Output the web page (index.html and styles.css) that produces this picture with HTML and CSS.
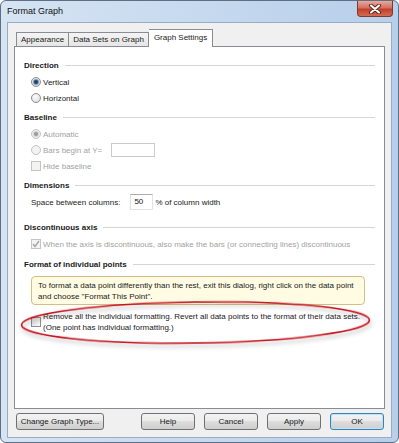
FILE: index.html
```html
<!DOCTYPE html>
<html lang="en">
<head>
  <meta charset="UTF-8" />
  <title>Format Graph</title>
  <link rel="stylesheet" href="styles.css">
</head>
<body>
  <div class="window">
    <div class="titlebar">
      <span class="title">Format Graph</span>
      <div class="close">
        <svg width="14" height="10" viewBox="0 0 14 10">
          <path d="M3 1.5 L11 8.5 M11 1.5 L3 8.5" stroke="#5a2a25" stroke-width="4" stroke-linecap="round"/>
          <path d="M3 1.5 L11 8.5 M11 1.5 L3 8.5" stroke="#fff" stroke-width="2" stroke-linecap="round"/>
        </svg>
      </div>
    </div>

    <div class="client">
      <div class="tabs">
        <div class="tab">Appearance</div>
        <div class="tab">Data Sets on Graph</div>
        <div class="tab active">Graph Settings</div>
      </div>

      <div class="panel">
        <div class="section first">
          <div class="heading">Direction</div>
          <div class="options">
            <div class="option"><span class="radio on"></span>Vertical</div>
            <div class="option"><span class="radio"></span>Horizontal</div>
          </div>
        </div>

        <div class="section">
          <div class="heading">Baseline</div>
          <div class="options disabled">
            <div class="option"><span class="radio on"></span>Automatic</div>
            <div class="option"><span class="radio"></span>Bars begin at Y=<span class="field wide"></span></div>
            <div class="option"><span class="check"></span>Hide baseline</div>
          </div>
        </div>

        <div class="section">
          <div class="heading">Dimensions</div>
          <div class="options">
            <div class="option plain">Space between columns:<span class="field short">50</span>% of column width</div>
          </div>
        </div>

        <div class="section axis">
          <div class="heading">Discontinuous axis</div>
          <div class="options disabled">
            <div class="option">
              <span class="check">
                <svg width="8" height="8" viewBox="0 0 8 8"><path d="M1 4 L3 6.5 L7 1" fill="none" stroke="#a6a6a6" stroke-width="1.4"/></svg>
              </span>When the axis is discontinuous, also make the bars (or connecting lines) discontinuous
            </div>
          </div>
        </div>

        <div class="section points">
          <div class="heading">Format of individual points</div>
          <div class="note">
            To format a data point differently than the rest, exit this dialog, right click on the data point<br>
            and choose "Format This Point".
          </div>
          <div class="option multi">
            <span class="check"></span>
            <span>Remove all the individual formatting. Revert all data points to the format of their data sets.<br>(One point has individual formatting.)</span>
          </div>
        </div>

        <svg class="highlight" viewBox="0 0 369 361">
          <defs>
            <filter id="shade" x="-10%" y="-50%" width="120%" height="200%">
              <feDropShadow dx="1" dy="3" stdDeviation="2" flood-color="#000" flood-opacity="0.3"/>
            </filter>
          </defs>
          <ellipse cx="180.5" cy="275.5" rx="174" ry="20.5" transform="rotate(-0.8 180.5 275.5)"
                   fill="none" stroke="#c3121c" stroke-width="1.6" filter="url(#shade)"/>
        </svg>
      </div>

      <div class="buttons">
        <div class="button change">Change Graph Type...</div>
        <div class="button">Help</div>
        <div class="button">Cancel</div>
        <div class="button">Apply</div>
        <div class="button default">OK</div>
      </div>
    </div>
  </div>
</body>
</html>
```

FILE: styles.css
```css
body { margin: 0; background: #fff; font-family: "Liberation Sans", Arial, sans-serif; font-size: 8px; color: #1a1a1a; }

.window { width: 399px; height: 443px; box-sizing: border-box; border: 1px solid #5e6f84; border-radius: 6px;
  background: linear-gradient(to right, #d6e4f3, #c3d7ee 60%, #b7cfea); padding-bottom: 4px; overflow: hidden; }

.titlebar { height: 21px; display: flex; align-items: flex-start; padding: 0 5px 0 6px; }
.title { font-size: 9px; line-height: 20px; color: #111; flex: 1; }
.close { width: 36px; height: 16px; box-sizing: border-box; border: 1px solid #7b3a33; border-top: none;
  border-radius: 0 0 4px 4px; background: linear-gradient(#e9a99c, #d4705f 45%, #c2402b 55%, #d56a4f);
  display: flex; align-items: center; justify-content: center; }

.client { margin: 0 6px; border: 1px solid #9aacc2; background: #f0f0f0; padding: 6px 6px 7px 6px; }

.tabs { height: 18px; margin-bottom: -1px; padding-left: 2px; display: flex; align-items: flex-end; }
.tab { height: 15px; box-sizing: border-box; border: 1px solid #898c95; border-left: none; padding: 0 4px;
  background: linear-gradient(#f4f4f4, #e6e6e6); line-height: 14px; white-space: nowrap; }
.tab:first-child { border-left: 1px solid #898c95; }
.tab.active { height: 18px; background: #fff; border-left: none; border-bottom: none; padding: 0 5px;
  line-height: 16px; position: relative; z-index: 1; }

.panel { height: 363px; box-sizing: border-box; border: 1px solid #898c95; background: #fff; padding: 11px 9px 0;
  position: relative; }

.section { margin-top: 4px; }
.section.first { margin-top: 0; }
.section.axis { margin-top: 10px; }
.section.points { margin-top: 5px; }

.heading { height: 14px; display: flex; align-items: center; gap: 6px; font-weight: bold; white-space: nowrap; }
.heading::after { content: ""; flex: 1; height: 1px; background: #d5d5d5; }

.options { margin-top: 2px; padding-left: 7px; }
.options.disabled { color: #a2a2a2; }
.option { height: 16px; display: flex; align-items: center; white-space: nowrap; }
.option.plain { padding-left: 0; }

.radio { width: 10px; height: 10px; box-sizing: border-box; border-radius: 50%; border: 1px solid #8d8f91;
  background: radial-gradient(circle at 40% 35%, #fdfdfd, #d6d7d9); margin-right: 2px; display: flex;
  align-items: center; justify-content: center; }
.radio.on::after { content: ""; width: 4px; height: 4px; border-radius: 50%; background: #24456e; box-shadow: 0 0 1px 1px #6f90bb; }
.disabled .radio { border-color: #c4c4c4; background: #f3f3f3; }
.disabled .radio.on::after { background: #9c9c9c; box-shadow: 0 0 1px 1px #d0d0d0; }

.check { width: 10px; height: 10px; box-sizing: border-box; border: 1px solid #8f8f8f;
  background: linear-gradient(135deg, #dcdcdc, #fafafa); margin-right: 2px; display: flex;
  align-items: center; justify-content: center; flex: none; }
.disabled .check { border-color: #c4c4c4; background: #f4f4f4; }

.field { display: inline-block; height: 14px; box-sizing: border-box; border: 1px solid #c8cbd0; background: #fff;
  margin-left: 9px; }
.field.wide { width: 44px; }
.field.short { width: 23px; height: 16px; border-color: #abadb3 #e2e3ea #e2e3ea #dbdfe6; margin: 0 2px 0 10px;
  padding-left: 3px; line-height: 14px; color: #111; }

.note { margin: 5px 10px 0 7px; border: 1px solid #d4be86; border-radius: 4px; background: #fffce3;
  padding: 3px 6px 2px; line-height: 11px; white-space: nowrap; }

.option.multi { height: auto; margin-top: 6px; padding-left: 7px; line-height: 11px; }

.highlight { position: absolute; left: 0; top: 0; width: 369px; height: 361px; pointer-events: none; overflow: visible; }

.buttons { margin-top: 4px; height: 17px; display: flex; gap: 9px; padding-left: 2px; }
.button { width: 54px; box-sizing: border-box; border: 1px solid #707070; border-radius: 3px;
  background: linear-gradient(#f3f3f3, #ebebeb 45%, #dddddd 50%, #cfcfcf); text-align: center; line-height: 15px; }
.button.change { width: 88px; margin-right: 28px; }
.button.default { border-color: #3c7fb1; box-shadow: inset 0 0 0 1px #b9e4f9; }
```
